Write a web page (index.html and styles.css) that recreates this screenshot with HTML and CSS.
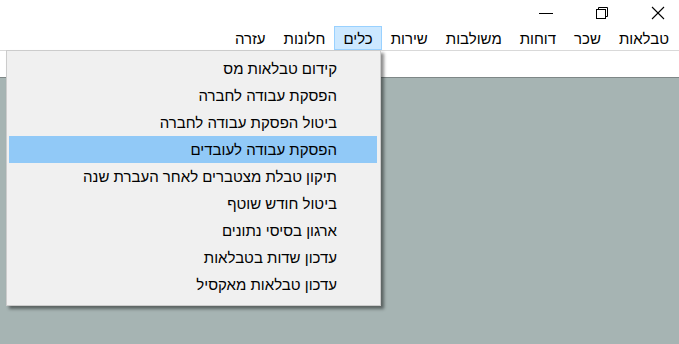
FILE: index.html
```html
<!DOCTYPE html>
<html lang="he" dir="rtl">
<head>
<meta charset="UTF-8">
<title>כלים</title>
<link rel="stylesheet" href="styles.css">
</head>
<body>
<div class="titlebar">
  <span class="ctl">
    <svg width="14" height="14" viewBox="0 0 14 14"><line x1="0" y1="7.5" x2="14" y2="7.5" stroke="#000" stroke-width="1"/></svg>
  </span>
  <span class="ctl">
    <svg width="14" height="14" viewBox="0 0 14 14" fill="none" stroke="#000" stroke-width="1"><rect x="1.5" y="3.5" width="9" height="9"/><path d="M3.5 3.5V1.5h9v9h-2"/></svg>
  </span>
  <span class="ctl">
    <svg width="14" height="14" viewBox="0 0 14 14" stroke="#000" stroke-width="1.1"><line x1="1" y1="1" x2="13" y2="13"/><line x1="13" y1="1" x2="1" y2="13"/></svg>
  </span>
</div>
<div class="menubar">
  <span class="menu-item">טבלאות</span>
  <span class="menu-item">שכר</span>
  <span class="menu-item">דוחות</span>
  <span class="menu-item">משולבות</span>
  <span class="menu-item">שירות</span>
  <span class="menu-item open">כלים</span>
  <span class="menu-item">חלונות</span>
  <span class="menu-item">עזרה</span>
</div>
<div class="toolbar"></div>
<div class="workspace"></div>

<ul class="dropdown">
  <li>קידום טבלאות מס</li>
  <li>הפסקת עבודה לחברה</li>
  <li>ביטול הפסקת עבודה לחברה</li>
  <li class="hover">הפסקת עבודה לעובדים</li>
  <li>תיקון טבלת מצטברים לאחר העברת שנה</li>
  <li>ביטול חודש שוטף</li>
  <li>ארגון בסיסי נתונים</li>
  <li>עדכון שדות בטבלאות</li>
  <li>עדכון טבלאות מאקסיל</li>
</ul>
</body>
</html>
```

FILE: styles.css
```css
html, body {
  margin: 0;
  height: 100%;
}

body {
  background: #fff;
  font-family: "Liberation Sans", Arial, sans-serif;
  font-size: 15px;
  color: #000;
  overflow: hidden;
  position: relative;
  display: flex;
  flex-direction: column;
}

.titlebar {
  height: 26px;
  flex: none;
  display: flex;
  direction: ltr;
  justify-content: flex-end;
  align-items: center;
  gap: 42px;
  padding-right: 14px;
  box-sizing: border-box;
}

.ctl {
  display: flex;
  width: 14px;
  height: 14px;
}

.menubar {
  height: 24px;
  flex: none;
  display: flex;
  align-items: stretch;
  padding-right: 1px;
  border-bottom: 1px solid #d9d9d9;
}

.menu-item {
  display: flex;
  align-items: center;
  padding: 0 8px;
  border: 1px solid transparent;
}

.menu-item.open {
  background: #cce8ff;
  border-color: #99d1ff;
}

.toolbar {
  height: 26px;
  flex: none;
  background: #fff;
  border-bottom: 1px solid #7e8787;
}

.workspace {
  flex: 1;
  background: #a6b4b3;
}

/* open menu */
.dropdown {
  position: absolute;
  top: 50px;
  left: 6px;
  width: 375px;
  margin: 0;
  padding: 4px 3px 7px 2px;
  box-sizing: border-box;
  list-style: none;
  background: #f0f0f0;
  border: 1px solid #cccccc;
  box-shadow: 3px 3px 3px rgba(0, 0, 0, 0.45);
}

.dropdown li {
  height: 27px;
  line-height: 27px;
  padding-right: 40px;
}

.dropdown li.hover {
  background: #91c9f7;
}
```
